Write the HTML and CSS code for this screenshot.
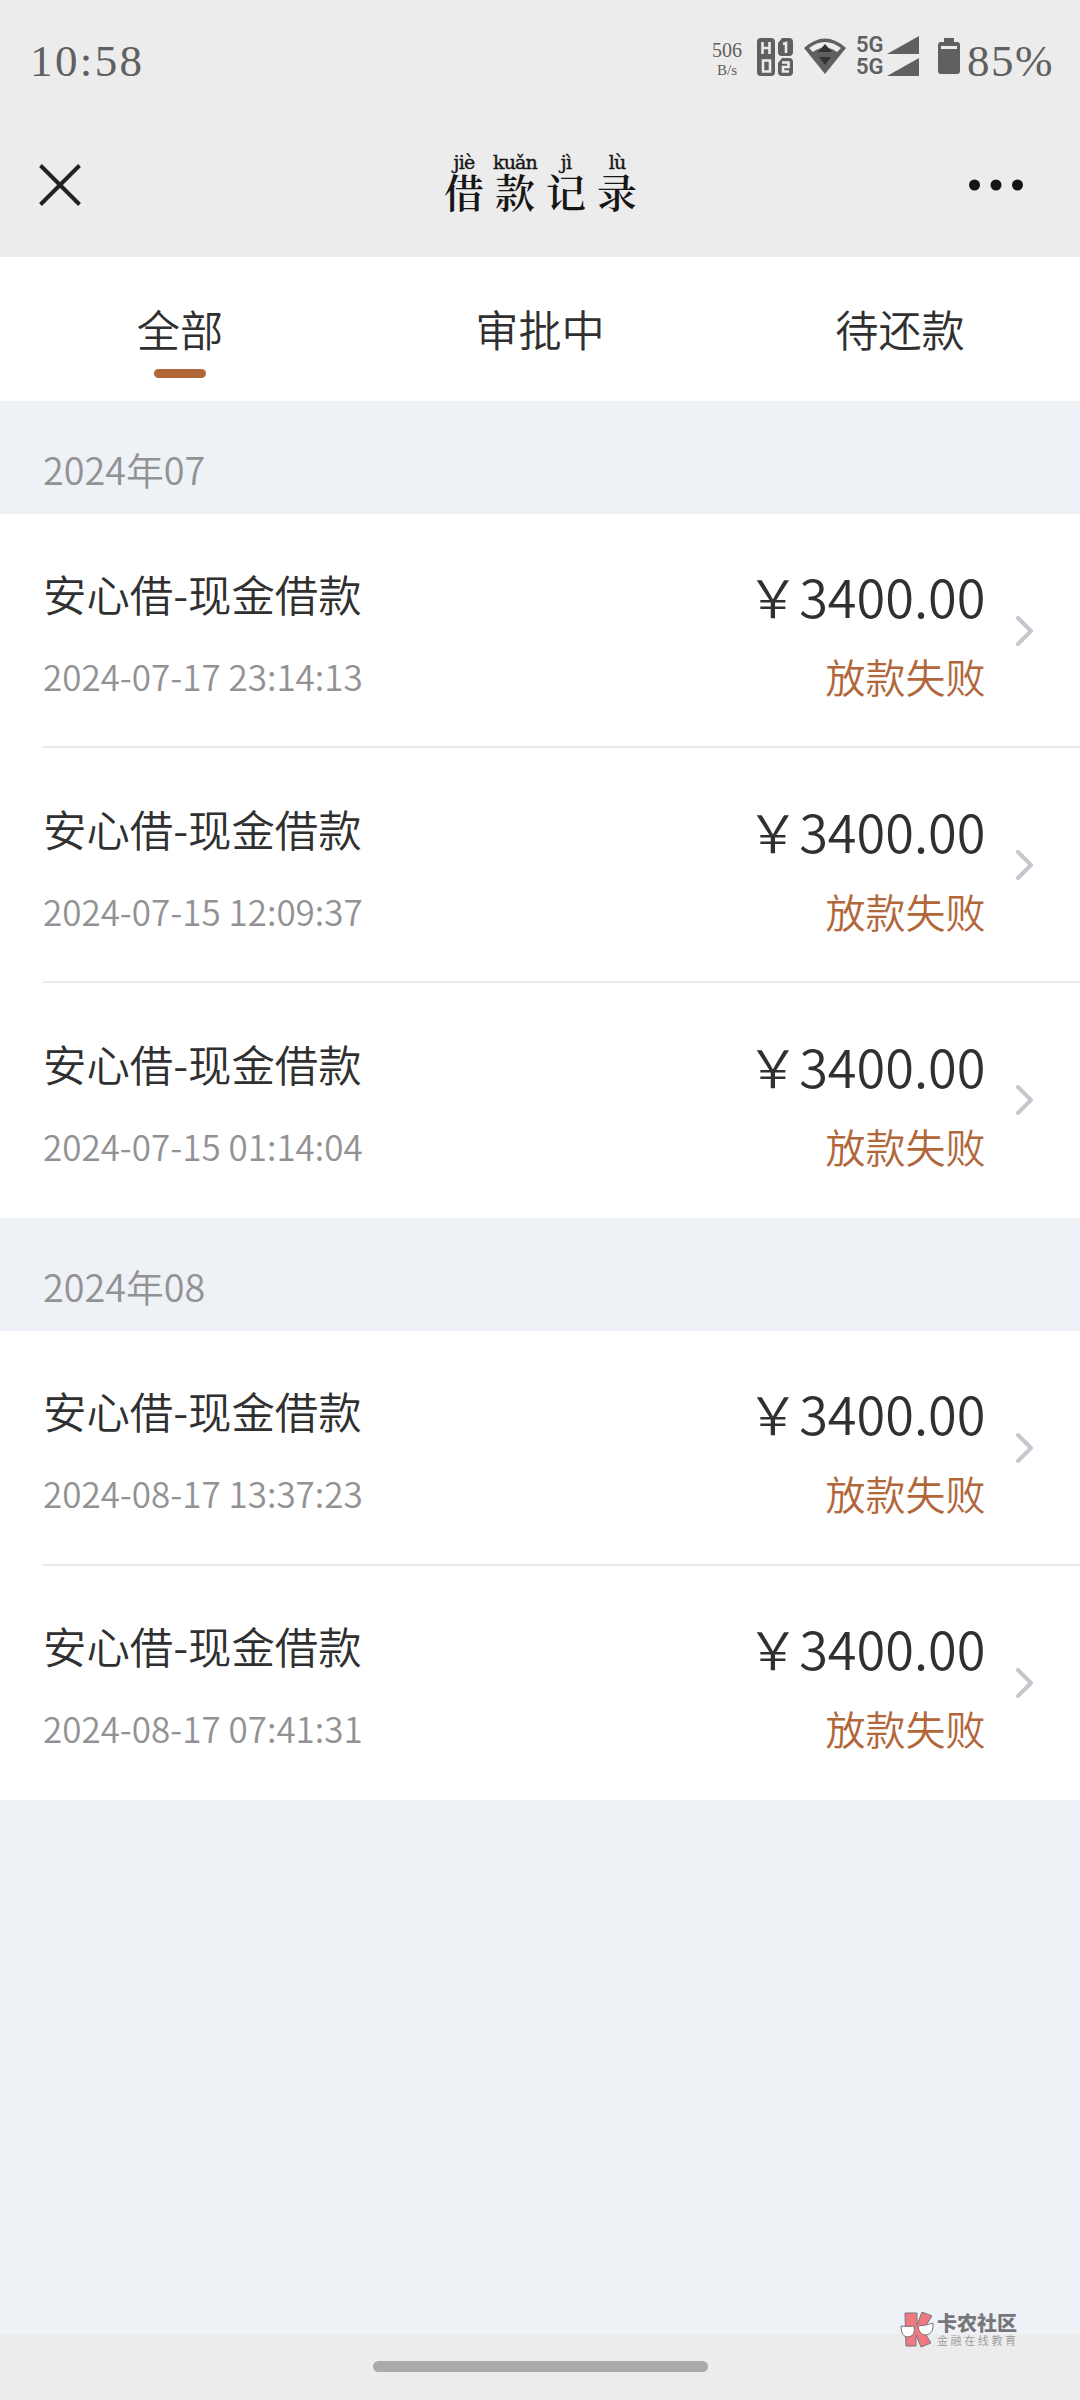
FILE: index.html
```html
<!DOCTYPE html>
<html lang="zh-CN">
<head>
<meta charset="utf-8">
<title>借款记录</title>
<link rel="stylesheet" href="styles.css">
</head>
<body>
<div class="status">
  <span class="clock">10:58</span>
  <div class="speed"><span>506</span><span class="unit">B/s</span></div>
  <svg class="hd" width="36" height="38" viewBox="0 0 36 38"><rect width="18" height="38" rx="4" fill="#606060"/><path d="M25 0h7q4 0 4 4v10q0 4-4 4H25q-4 0-4-4V5zM25 20h7q4 0 4 4v10q0 4-4 4H25q-4 0-4-4V25z" fill="#606060"/><path d="M5.500 4v12M12.500 4v12M5.500 10h7M6 22.500h7v11H6zM26 6l3-1v10M25 24.500h6.500v4.500H26v4.500h6" fill="none" stroke="#ececec" stroke-width="2.600"/></svg>
  <svg class="wifi" width="42" height="36" viewBox="0 0 42 36"><path d="M0 10Q21-9 42 10L21 36z" fill="#606060"/><path d="M5 10Q21-2 37 10L33 14Q21 5 9 14z" fill="#ececec"/><path d="M21 6l7 8H14zM15 19h12l-6 8z" fill="#333"/></svg>
  <div class="net"><div><b>5G</b><svg width="32" height="18"><path d="M0 18L32 0v18z" fill="#606060"/></svg></div><div><b>5G</b><svg width="32" height="18"><path d="M0 18L32 0v18z" fill="#606060"/></svg></div></div>
  <svg class="battery" width="22" height="36" viewBox="0 0 22 36"><path d="M6 0h10v4h3q3 0 3 3v26q0 3-3 3H3q-3 0-3-3V7q0-3 3-3h3z" fill="#606060"/><path d="M3 8h16v3H3z" fill="#ececec"/></svg>
  <span class="percent">85%</span>
</div>
<header class="nav">
  <svg width="42" height="42" viewBox="0 0 42 42"><path d="M1.500 1.500l39 39M40.500 1.500l-39 39" stroke="#222" stroke-width="4"/></svg>
  <h1 class="title"><span><i>jiè</i>借</span><span><i>kuǎn</i>款</span><span><i>jì</i>记</span><span><i>lù</i>录</span></h1>
  <svg width="54" height="12"><circle cx="5.500" cy="6" r="5.500" fill="#161616"/><circle cx="27" cy="6" r="5.500" fill="#161616"/><circle cx="48.500" cy="6" r="5.500" fill="#161616"/></svg>
</header>
<nav class="tabs"><span class="tab active">全部</span><span class="tab">审批中</span><span class="tab">待还款</span></nav>
<main class="list">
  <h2 class="month">2024年07</h2>
  <section class="group">
    <article class="row"><div class="info"><div class="name">安心借-现金借款</div><time>2024-07-17 23:14:13</time></div><div class="sum"><div class="money">￥3400.00</div><div class="state">放款失败</div></div><svg class="arrow" width="18" height="30" viewBox="0 0 18 30"><path d="M2 2l13 13L2 28"/></svg></article>
    <article class="row"><div class="info"><div class="name">安心借-现金借款</div><time>2024-07-15 12:09:37</time></div><div class="sum"><div class="money">￥3400.00</div><div class="state">放款失败</div></div><svg class="arrow" width="18" height="30" viewBox="0 0 18 30"><path d="M2 2l13 13L2 28"/></svg></article>
    <article class="row"><div class="info"><div class="name">安心借-现金借款</div><time>2024-07-15 01:14:04</time></div><div class="sum"><div class="money">￥3400.00</div><div class="state">放款失败</div></div><svg class="arrow" width="18" height="30" viewBox="0 0 18 30"><path d="M2 2l13 13L2 28"/></svg></article>
  </section>
  <h2 class="month">2024年08</h2>
  <section class="group">
    <article class="row"><div class="info"><div class="name">安心借-现金借款</div><time>2024-08-17 13:37:23</time></div><div class="sum"><div class="money">￥3400.00</div><div class="state">放款失败</div></div><svg class="arrow" width="18" height="30" viewBox="0 0 18 30"><path d="M2 2l13 13L2 28"/></svg></article>
    <article class="row"><div class="info"><div class="name">安心借-现金借款</div><time>2024-08-17 07:41:31</time></div><div class="sum"><div class="money">￥3400.00</div><div class="state">放款失败</div></div><svg class="arrow" width="18" height="30" viewBox="0 0 18 30"><path d="M2 2l13 13L2 28"/></svg></article>
  </section>
</main>
<footer class="home"><div class="handle"></div></footer>
<div class="mark">
  <svg width="34" height="36" viewBox="0 0 34 36"><g stroke="#77777b" stroke-width="1"><path d="M5 1h12v12L22 0l10 4-9 14 8 13-10 4-5-12v11H6z" fill="#f07880"/><path d="M1 14q6 1 13 0 2 10-6 11-7 0-7-11zM18 14q7 0 15-3 1 11-7 12-7 0-8-9z" fill="#fff"/></g></svg>
  <div class="marktext"><span class="brand">卡农社区</span><span class="slogan">金融在线教育</span></div>
</div>
</body>
</html>
```
FILE: styles.css
```css
* { box-sizing: border-box; }
body { margin: 0; width: 1080px; height: 2400px; position: relative; display: flex; flex-direction: column; background: #eef1f6; color: #303030; font-family: "Noto Sans CJK SC", sans-serif; font-weight: 350; overflow: hidden; }
svg { display: block; flex: none; }
.status { height: 114px; flex: none; display: flex; align-items: flex-start; background: #ececec; color: #606060; padding: 0 27px 0 30px; }
.clock, .percent { font-family: "Liberation Serif", serif; font-size: 45px; line-height: 50px; padding-top: 36px; letter-spacing: 2.400px; }
.clock { flex: 1; }
.percent { width: 86px; letter-spacing: 1.500px; }
.speed { width: 32px; margin-right: 14px; padding-top: 39px; display: flex; flex-direction: column; align-items: center; font: 20px/22px "Liberation Serif", serif; }
.unit { font-size: 15px; line-height: 18px; }
.hd { margin: 38px 11px 0 0; }
.wifi { margin: 38px 10px 0 0; }
.net { display: flex; flex-direction: column; gap: 4px; margin: 36px 19px 0 0; font: 22px/18px Roboto, sans-serif; }
.net div { display: flex; gap: 4px; }
.net b { width: 27px; font-weight: 600; }
.battery { margin: 38px 7px 0 0; }
.nav { height: 143px; flex: none; display: flex; align-items: center; justify-content: space-between; background: #ececec; padding: 0 57px 0 39px; }
.nav > svg { margin-bottom: 2px; }
.title { display: flex; gap: 11px; margin: 0 0 10px 31px; font: 600 40px/38px "Noto Serif CJK SC", "Noto Sans CJK SC", serif; color: #161616; }
.title span { width: 40px; display: flex; flex-direction: column; align-items: center; }
.title i { font: 19px/20px "DejaVu Serif", serif; letter-spacing: -0.800px; -webkit-text-stroke: 0.4px #161616; }
.tabs { height: 144px; flex: none; display: grid; grid-template-columns: repeat(3, 1fr); background: #fff; }
.tab { display: flex; flex-direction: column; align-items: center; padding-top: 41px; font-size: 43.2px; line-height: 60px; }
.active::after { content: ""; width: 52px; height: 9px; margin-top: 11px; border-radius: 5px; background: #b2673b; }
.month { height: 112.700px; margin: 0; padding: 40px 43px 0; font-size: 37.8px; line-height: 56px; font-weight: 350; color: #929295; }
.group { background: #fff; }
.row { height: 234.800px; margin-left: 43px; display: flex; padding-right: 46px; border-bottom: 2px solid #eaeaec; }
.row:last-child { border-bottom-color: transparent; }
.info { flex: 1; }
.name { font-size: 43.4px; line-height: 60px; padding-top: 49.500px; }
time { display: block; font-size: 35px; line-height: 50px; margin-top: 28px; color: #929295; }
.sum { display: flex; flex-direction: column; align-items: flex-end; margin-right: 30.500px; }
.money { font-size: 52.300px; line-height: 70px; padding-top: 46.500px; }
.state { font-size: 40px; line-height: 56px; margin-top: 18px; color: #b2673b; }
.arrow { margin-top: 102px; fill: none; stroke: #c5c6ce; stroke-width: 4; stroke-linecap: round; stroke-linejoin: round; }
.home { height: 66px; margin-top: auto; background: #ececec; display: flex; justify-content: center; padding-top: 27px; }
.handle { width: 335px; height: 11px; border-radius: 6px; background: #aaa; }
.mark { position: absolute; left: 900px; top: 2312px; display: flex; gap: 3px; color: #77777b; }
.marktext { display: flex; flex-direction: column; }
.brand { font-size: 20px; font-weight: 900; line-height: 22px; }
.slogan { font-size: 11px; line-height: 13px; letter-spacing: 2.600px; color: #999; }
```
